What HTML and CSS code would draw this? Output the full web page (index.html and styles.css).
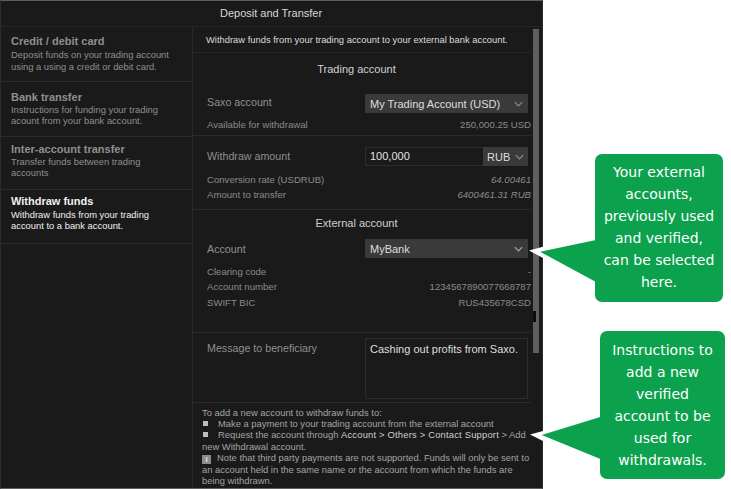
FILE: index.html
```html
<!DOCTYPE html>
<html lang="en">
<head>
<meta charset="utf-8">
<title>Deposit and Transfer</title>
<link rel="stylesheet" href="styles.css">
</head>
<body>
<div class="window">
  <header class="titlebar">Deposit and Transfer</header>
  <div class="columns">
    <nav class="sidebar">
      <div class="nav-item"><div class="nav-title">Credit / debit card</div><div class="nav-desc">Deposit funds on your trading account<br>using a using a credit or debit card.</div></div>
      <div class="nav-item"><div class="nav-title">Bank transfer</div><div class="nav-desc">Instructions for funding your trading<br>acount from your bank account.</div></div>
      <div class="nav-item"><div class="nav-title">Inter-account transfer</div><div class="nav-desc">Transfer funds between trading<br>accounts</div></div>
      <div class="nav-item active"><div class="nav-title">Withdraw funds</div><div class="nav-desc">Withdraw funds from your trading<br>account to a bank account.</div></div>
    </nav>
    <main class="panel">
      <div class="scrollarea">
        <div class="intro">Withdraw funds from your trading account to your external bank account.</div>
        <section class="sec sec-trading">
          <h2 class="sec-title">Trading account</h2>
          <div class="field field-first"><span class="label label-up">Saxo account</span>
            <div class="select"><span>My Trading Account (USD)</span><svg class="chev" viewBox="0 0 10 6"><path d="M1 1l4 4 4-4"/></svg></div></div>
          <div class="info info-avail"><span>Available for withdrawal</span><span>250,000.25 USD</span></div>
        </section>
        <section class="sec sec-amount">
          <div class="field"><span class="label label-up-sm">Withdraw amount</span>
            <div class="amount"><span class="amount-input">100,000</span><div class="currency"><span>RUB</span><svg class="chev" viewBox="0 0 10 6"><path d="M1 1l4 4 4-4"/></svg></div></div></div>
          <div class="info info-gap"><span>Conversion rate (USDRUB)</span><em>64.00461</em></div>
          <div class="info"><span>Amount to transfer</span><em>6400461.31 RUB</em></div>
        </section>
        <section class="sec sec-external">
          <h2 class="sec-title">External account</h2>
          <div class="field field-ext"><span class="label">Account</span>
            <div class="select"><span>MyBank</span><svg class="chev chev-bright" viewBox="0 0 10 6"><path d="M1 1l4 4 4-4"/></svg></div></div>
          <div class="info info-gap"><span>Clearing code</span><span>-</span></div>
          <div class="info"><span>Account number</span><span>1234567890077668787</span></div>
          <div class="info"><span>SWIFT BIC</span><span>RUS435678CSD</span></div>
        </section>
        <section class="sec-message">
          <span class="label label-msg">Message to beneficiary</span>
          <div class="textarea">Cashing out profits from Saxo.</div>
        </section>
        <div class="scrollbar"></div>
        <div class="notch"></div>
      </div>
      <footer class="notes">
        <div>To add a new account to withdraw funds to:</div>
        <div><i class="bullet"></i>Make a payment to your trading account from the external account</div>
        <div><i class="bullet"></i>Request the account through <b>Account &gt; Others &gt; Contact Support</b> &gt; Add new Withdrawal account.</div>
        <div><i class="info-icon">i</i>Note that third party payments are not supported. Funds will only be sent to an account held in the same name or the account from which the funds are being withdrawn.</div>
      </footer>
    </main>
  </div>
</div>
<aside class="callout callout-a">Your external accounts, previously used and verified, can be selected here.</aside>
<svg class="tail tail-a" viewBox="525 236 75 50"><path class="tail-white" d="M529 250.5L543 246.7V258Z"/><path class="tail-fill" d="M540 251.7L596 240V282Z"/></svg>
<aside class="callout callout-b">Instructions to add a new verified account to be used for withdrawals.</aside>
<svg class="tail tail-b" viewBox="525 410 76 55"><path class="tail-white" d="M530 434.5L543 431V441Z"/><path class="tail-fill" d="M541.7 435L601 416.7V459.3Z"/></svg>
</body>
</html>
```
FILE: styles.css
```css
* { box-sizing: border-box; }
html, body { margin: 0; padding: 0; }
body { position: relative; width: 731px; height: 489px; background: #fff; overflow: hidden; font-family: "Liberation Sans", Arial, sans-serif; }

.window { width: 543px; height: 489px; background: #1a1a1a; border-top: 1px solid #5e5e5e; border-bottom: 1px solid #5e5e5e; border-left: 1px solid #2c2c2c; border-right: 1px solid #2c2c2c; display: flex; flex-direction: column; }
.titlebar { height: 26px; flex: none; border-bottom: 1px solid #262626; color: #d8d8d8; font-size: 11px; line-height: 25px; padding-left: 219px; }
.columns { flex: 1; display: flex; min-height: 0; }

.sidebar { width: 192px; flex: none; border-right: 1px solid #2a2a2a; }
.nav-item { height: 54px; border-bottom: 1px solid #2a2a2a; padding: 7px 0 0 10px; color: #8f8f8f; }
.nav-item:nth-child(1) { height: 55px; }
.nav-item:nth-child(2) { height: 55px; padding-top: 8px; }
.nav-item:nth-child(3) { height: 53px; padding-top: 5px; }
.nav-item:nth-child(4) { padding-top: 4px; }
.nav-title { font-size: 11px; font-weight: bold; line-height: 14px; }
.nav-desc { font-size: 9.4px; line-height: 11px; }
.nav-item:nth-child(1) .nav-desc { margin-top: 1px; line-height: 11.5px; }
.nav-item:nth-child(4) .nav-desc { margin-top: 1px; }
.active { color: #f0f0f0; }

.panel { flex: 1; display: flex; flex-direction: column; min-width: 0; }
.scrollarea { position: relative; height: 376px; flex: none; padding-right: 11px; }
.intro { height: 26px; border-bottom: 1px solid #262626; padding-left: 13px; font-size: 9.4px; line-height: 25px; color: #dcdcdc; white-space: nowrap; }
.sec { border-bottom: 1px solid #2a2a2a; }
.sec-title { margin: 0; padding-right: 11px; text-align: center; font-weight: normal; font-size: 11px; color: #d2d2d2; }
.sec-trading { height: 83px; padding-top: 9px; }
.sec-trading .sec-title { line-height: 14px; }
.sec-amount { height: 74px; padding-top: 11px; }
.sec-external { height: 123px; padding-top: 7px; }
.sec-external .sec-title { line-height: 13px; }

.field { display: flex; justify-content: space-between; align-items: center; height: 19px; padding: 0 3px 0 14px; }
.field-first { margin-top: 18px; }
.field-ext { margin-top: 9px; }
.label { font-size: 10.7px; color: #8f8f8f; }
.label-up { margin-bottom: 3px; }
.label-up-sm { margin-bottom: 1px; }
.select { width: 163px; height: 19px; background: #3a3a3a; color: #dedede; font-size: 11px; display: flex; align-items: center; justify-content: space-between; padding: 0 5px; }
.chev { width: 9px; height: 6px; fill: none; stroke: #8a8a8a; stroke-width: 1.3; }
.chev-bright { stroke: #a8a8a8; }
.amount { width: 163px; height: 19px; display: flex; border: 1px solid #2c2c2c; }
.amount-input { flex: 1; color: #e2e2e2; font-size: 11px; line-height: 17px; padding-left: 4px; }
.currency { width: 45px; margin: -1px -1px -1px 0; background: #3a3a3a; color: #dedede; font-size: 11px; display: flex; align-items: center; justify-content: space-between; padding: 0 4px; }

.info { display: flex; justify-content: space-between; padding: 0 0 0 14px; font-size: 9.6px; line-height: 15.4px; color: #8a8a8a; }
.info em { font-style: italic; }
.info-avail { margin-top: 4px; }
.info-gap { margin-top: 6px; }

.sec-message { display: flex; justify-content: space-between; height: 70px; padding: 5px 3px 0 14px; border-bottom: 1px solid #2a2a2a; }
.label-msg { padding-top: 4px; }
.textarea { width: 163px; height: 61px; border: 1px solid #2c2c2c; color: #dedede; font-size: 11px; line-height: 14px; padding: 3px 4px; }

.scrollbar { position: absolute; top: 2px; right: 3px; width: 6px; height: 324px; background: #5f5f5f; }
.notch { position: absolute; top: 284px; right: 6px; width: 3px; height: 11px; background: #0c0c0c; }

.notes { flex: 1; padding: 4px 10px 0 9px; font-size: 9.4px; line-height: 11.2px; color: #a4a4a4; }
.notes b { font-weight: normal; letter-spacing: 0.2px; color: #d0d0d0; }
.bullet { display: inline-block; width: 5px; height: 5px; margin: 0 10px 1px 1px; background: #bdbdbd; }
.info-icon { display: inline-block; width: 9px; height: 9px; margin: 0 6px 0 0; background: #8c8c8c; color: #e4e4e4; font: bold 8px/9px "Liberation Sans", sans-serif; text-align: center; vertical-align: -1px; }

.callout { position: absolute; background: #0ca14c; color: #fff; border-radius: 7px; text-align: center; font-family: "DejaVu Sans", sans-serif; font-size: 14px; line-height: 22px; padding: 7px 6px; }
.callout-a { left: 595px; top: 154px; width: 128px; height: 148px; }
.callout-b { left: 600px; top: 331px; width: 125px; height: 148px; padding-top: 8px; }
.tail { position: absolute; }
.tail-a { left: 525px; top: 236px; width: 75px; height: 50px; }
.tail-b { left: 525px; top: 410px; width: 76px; height: 55px; }
.tail-fill { fill: #0ca14c; }
.tail-white { fill: #fff; }
```
